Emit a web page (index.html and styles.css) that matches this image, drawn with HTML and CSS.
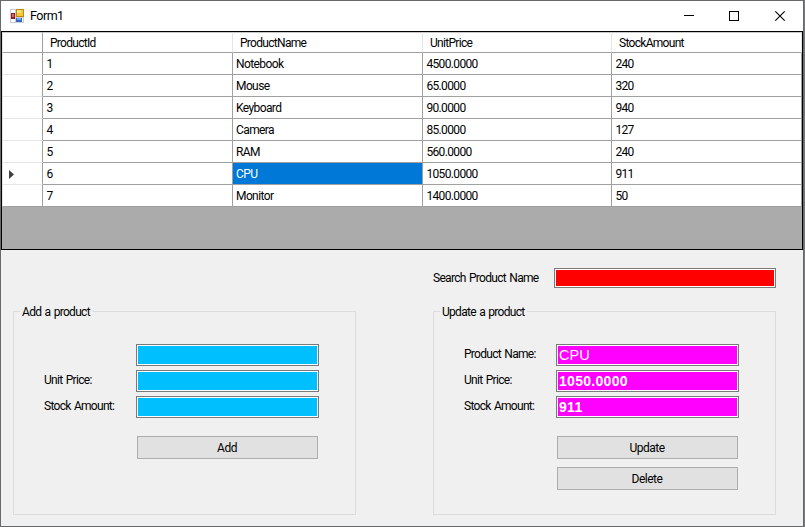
FILE: index.html
```
<!DOCTYPE html>
<html lang="en">
<head>
<meta charset="utf-8">
<title>Form1</title>
<link rel="stylesheet" href="styles.css">
</head>
<body>
<div class="window">
  <header class="titlebar">
    <svg class="app-icon" width="14" height="14" viewBox="0 0 14 14" shape-rendering="crispEdges">
      <rect width="14" height="14" fill="#c9cdd3"/>
      <rect x="1" y="1" width="4" height="3" fill="#fff"/>
      <rect x="1" y="10" width="4" height="3" fill="#fff"/>
      <rect x="12" y="9" width="1" height="4" fill="#fff"/>
      <rect x="1" y="4" width="4" height="6" fill="#8f1f1f"/>
      <rect x="2" y="5" width="2" height="3" fill="#d66a62"/>
      <rect x="6" y="0" width="8" height="8" fill="#b98a17"/>
      <rect x="7" y="1" width="6" height="6" fill="#f4c63a"/>
      <rect x="7" y="1" width="4" height="3" fill="#fbe07c"/>
      <rect x="6" y="9" width="6" height="4" fill="#3568c4"/>
      <rect x="7" y="9" width="4" height="2" fill="#7ba6ea"/>
    </svg>
    <span class="title">Form1</span>
    <svg class="controls" width="102" height="12" viewBox="0 0 102 12" fill="none" stroke="#000">
      <path d="M0 5.500h10M45.500 1.500h9v9h-9z" shape-rendering="crispEdges"/>
      <path d="M91.300 1.300l9.400 9.400M100.700 1.300l-9.400 9.400" stroke-width="1.100"/>
    </svg>
  </header>

  <div class="grid">
    <div class="row head"><div></div><div>ProductId</div><div>ProductName</div><div>UnitPrice</div><div>StockAmount</div></div>
    <div class="row"><div></div><div class="num">1</div><div>Notebook</div><div class="num">4500.0000</div><div class="num">240</div></div>
    <div class="row"><div></div><div class="num">2</div><div>Mouse</div><div class="num">65.0000</div><div class="num">320</div></div>
    <div class="row"><div></div><div class="num">3</div><div>Keyboard</div><div class="num">90.0000</div><div class="num">940</div></div>
    <div class="row"><div></div><div class="num">4</div><div>Camera</div><div class="num">85.0000</div><div class="num">127</div></div>
    <div class="row"><div></div><div class="num">5</div><div>RAM</div><div class="num">560.0000</div><div class="num">240</div></div>
    <div class="row"><div><svg class="marker" width="5" height="9" viewBox="0 0 5 9"><path d="M0 0l5 4.500-5 4.500z" fill="#404040"/></svg></div><div class="num">6</div><div class="selected">CPU</div><div class="num">1050.0000</div><div class="num">911</div></div>
    <div class="row"><div></div><div class="num">7</div><div>Monitor</div><div class="num">1400.0000</div><div class="num">50</div></div>
  </div>

  <div class="search"><span>Search Product Name</span><div class="box red"></div></div>

  <div class="groups">
    <section class="group">
      <h2>Add a product</h2>
      <div class="field"><span></span><div class="box blue"></div></div>
      <div class="field"><span>Unit Price:</span><div class="box blue"></div></div>
      <div class="field"><span>Stock Amount:</span><div class="box blue"></div></div>
      <div class="buttons"><div class="button">Add</div></div>
    </section>
    <section class="group">
      <h2>Update a product</h2>
      <div class="field"><span>Product Name:</span><div class="box pink cpu">CPU</div></div>
      <div class="field"><span>Unit Price:</span><div class="box pink">1050.0000</div></div>
      <div class="field"><span>Stock Amount:</span><div class="box pink">911</div></div>
      <div class="buttons"><div class="button">Update</div><div class="button">Delete</div></div>
    </section>
  </div>
</div>
</body>
</html>
```
FILE: styles.css
```
* { box-sizing: border-box; }
body {
  margin: 0;
  background: #77797c;
  color: #000;
  font: 12px/14px Roboto, "Liberation Sans", sans-serif;
  letter-spacing: -0.7px;
  word-spacing: 1px;
  white-space: nowrap;
  overflow: hidden;
}
.window {
  width: 804px;
  height: 527px;
  border: 1px solid #68696b;
  background: #f0f0f0;
}
.titlebar {
  height: 30px;
  padding: 0 17px 0 9px;
  display: flex;
  align-items: center;
  background: #fff;
}
.title { margin-left: 6px; font-size: 12.5px; letter-spacing: -0.5px; }
.controls { margin-left: auto; }

.grid {
  height: 219px;
  border: 1px solid #000;
  background: #ababab;
}
.row {
  height: 22px;
  display: grid;
  grid-template-columns: 41px 190px 190px 189px 190px;
}
.row > div {
  background: #fff;
  border-right: 1px solid #a0a0a0;
  border-bottom: 1px solid #a0a0a0;
  padding: 4px 0 0 3px;
  letter-spacing: -0.6px;
}
.row > div:first-child {
  border-bottom-color: #e5e5e5;
  border-left: 1px solid #e5e5e5;
  padding: 7px 0 0 6px;
}
.row:last-child > div:first-child { border-bottom-color: #a0a0a0; }
.marker { display: block; }
.head { height: 21px; }
.row.head > div {
  border-top: 1px solid #c8c8c8;
  border-right-color: #e5e5e5;
  border-bottom-color: #a0a0a0;
  padding: 3px 0 0 7px;
  letter-spacing: -0.7px;
}
.row.head > div:first-child { border-right-color: #a0a0a0; }
.row > .num { letter-spacing: -0.65px; padding-left: 3.4px; }
.row > .selected { background: #0078d7; color: #fff; }

.search {
  margin: 18px 27px 0 432px;
  height: 20px;
  display: flex;
  align-items: center;
  justify-content: space-between;
}
.search .box { width: 222px; height: 20px; }
.box {
  border: 1px solid #7a7a7a;
  padding: 1px;
  background-clip: content-box;
  box-shadow: inset 0 0 0 1px #fff;
}
.red { background-color: #f00; }
.blue { background-color: #00bfff; }
.pink {
  background-color: #f0f;
  color: #fff;
  font: bold 14px/19px "Liberation Sans", sans-serif;
  letter-spacing: 0.3px;
  text-indent: 1px;
}
.cpu { letter-spacing: 0; font-weight: normal; font-size: 14.5px; }

.groups {
  margin: 23px 27px 0 12px;
  display: flex;
  justify-content: space-between;
}
.group {
  width: 343px;
  height: 204px;
  border: 1px solid #dcdcdc;
  padding: 0 36px 0 30px;
}
.group h2 {
  width: max-content;
  margin: -7px 0 25px -24px;
  padding: 0 2px;
  background: #f0f0f0;
  font: inherit;
}
.field {
  height: 22px;
  margin-bottom: 4px;
  display: flex;
  justify-content: space-between;
}
.field span { padding-top: 3px; }
.field .box { width: 183px; height: 22px; }
.buttons {
  display: flex;
  flex-direction: column;
  gap: 8px;
  margin: 18px 1px 0 auto;
  width: 181px;
}
.button {
  height: 23px;
  border: 1px solid #adadad;
  background: #e1e1e1;
  text-align: center;
  line-height: 22px;
  letter-spacing: -0.5px;
  padding-right: 1px;
}
```
